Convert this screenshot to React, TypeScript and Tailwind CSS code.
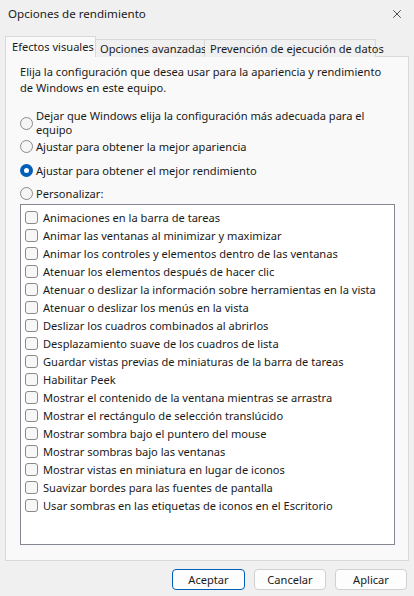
import { X } from 'lucide-react'

const effects = [
  'Animaciones en la barra de tareas',
  'Animar las ventanas al minimizar y maximizar',
  'Animar los controles y elementos dentro de las ventanas',
  'Atenuar los elementos después de hacer clic',
  'Atenuar o deslizar la información sobre herramientas en la vista',
  'Atenuar o deslizar los menús en la vista',
  'Deslizar los cuadros combinados al abrirlos',
  'Desplazamiento suave de los cuadros de lista',
  'Guardar vistas previas de miniaturas de la barra de tareas',
  'Habilitar Peek',
  'Mostrar el contenido de la ventana mientras se arrastra',
  'Mostrar el rectángulo de selección translúcido',
  'Mostrar sombra bajo el puntero del mouse',
  'Mostrar sombras bajo las ventanas',
  'Mostrar vistas en miniatura en lugar de iconos',
  'Suavizar bordes para las fuentes de pantalla',
  'Usar sombras en las etiquetas de iconos en el Escritorio',
]

function Radio({ checked }: { checked?: boolean }) {
  return checked ? (
    <span className="w-[13px] h-[13px] rounded-full bg-[#005fb8] flex items-center justify-center shrink-0">
      <span className="w-[5px] h-[5px] rounded-full bg-white" />
    </span>
  ) : (
    <span className="w-[13px] h-[13px] rounded-full border border-[#8a8a8a] bg-[#f5f5f5] shrink-0" />
  )
}

export default function App() {
  return (
    <div className="w-[414px] h-[596px] bg-[#f0f0f0] text-[11.1px] leading-[15px] text-[#1a1a1a] font-['Noto_Sans',sans-serif] flex flex-col">
      {/* Title bar */}
      <div className="h-[27px] flex items-center justify-between pl-[8px] pr-[10px]">
        <span className="text-[11.6px]">Opciones de rendimiento</span>
        <X className="w-[14px] h-[14px] text-[#1a1a1a]" strokeWidth={1.3} />
      </div>

      {/* Tabs */}
      <div className="mt-[9px] px-[5px] flex items-end h-[21px] relative z-10 whitespace-nowrap">
        <div className="h-[21px] w-[91px] bg-[#f9f9f9] border border-b-0 border-[#d9d9d9] flex items-center pl-[6px] pb-[2px]">
          Efectos visuales
        </div>
        <div className="h-[18px] w-[109px] bg-[#f0f0f0] border border-l-0 border-b-0 border-[#d9d9d9] flex items-center pl-[4px]">
          Opciones avanzadas
        </div>
        <div className="h-[18px] w-[171px] bg-[#f0f0f0] border border-l-0 border-b-0 border-[#d9d9d9] flex items-center pl-[5px]">
          Prevención de ejecución de datos
        </div>
      </div>

      {/* Panel */}
      <div className="mx-[5px] h-[505px] -mt-px bg-[#f9f9f9] border border-[#d9d9d9] pl-[14px] pr-[13px] pt-[7px]">
        <p className="leading-[16px] pr-[8px]">
          Elija la configuración que desea usar para la apariencia y rendimiento de Windows en este equipo.
        </p>

        <div className="mt-[12px] flex items-center gap-[3px] h-[30px]">
          <Radio />
          <span className="leading-[14px] pr-[20px]">
            Dejar que Windows elija la configuración más adecuada para el equipo
          </span>
        </div>
        <div className="mt-[1px] flex items-center gap-[3px] h-[15px]">
          <Radio />
          <span>Ajustar para obtener la mejor apariencia</span>
        </div>
        <div className="mt-[9px] flex items-center gap-[3px] h-[15px]">
          <Radio checked />
          <span>Ajustar para obtener el mejor rendimiento</span>
        </div>
        <div className="mt-[8px] flex items-center gap-[3px] h-[15px]">
          <Radio />
          <span>Personalizar:</span>
        </div>

        <div className="mt-[3px] h-[341px] bg-white border border-[#828790] pt-[3px] pl-[4px]">
          {effects.map((label) => (
            <div key={label} className="h-[18px] flex items-center gap-[5px]">
              <span className="w-[13px] h-[13px] rounded-[3px] border border-[#8a8a8a] bg-[#f7f7f7] shrink-0" />
              <span className="whitespace-nowrap">{label}</span>
            </div>
          ))}
        </div>
      </div>

      {/* Buttons */}
      <div className="mt-[8px] pr-[7px] flex justify-end gap-[9px]">
        <button className="w-[73px] h-[21px] rounded-[4px] bg-[#fdfdfd] border border-[#005fb8] text-[11.1px]">
          Aceptar
        </button>
        <button className="w-[72px] h-[21px] rounded-[4px] bg-[#fdfdfd] border border-[#d0d0d0] text-[11.1px]">
          Cancelar
        </button>
        <button className="w-[72px] h-[21px] rounded-[4px] bg-[#fdfdfd] border border-[#d0d0d0] text-[11.1px]">
          Aplicar
        </button>
      </div>
    </div>
  )
}
